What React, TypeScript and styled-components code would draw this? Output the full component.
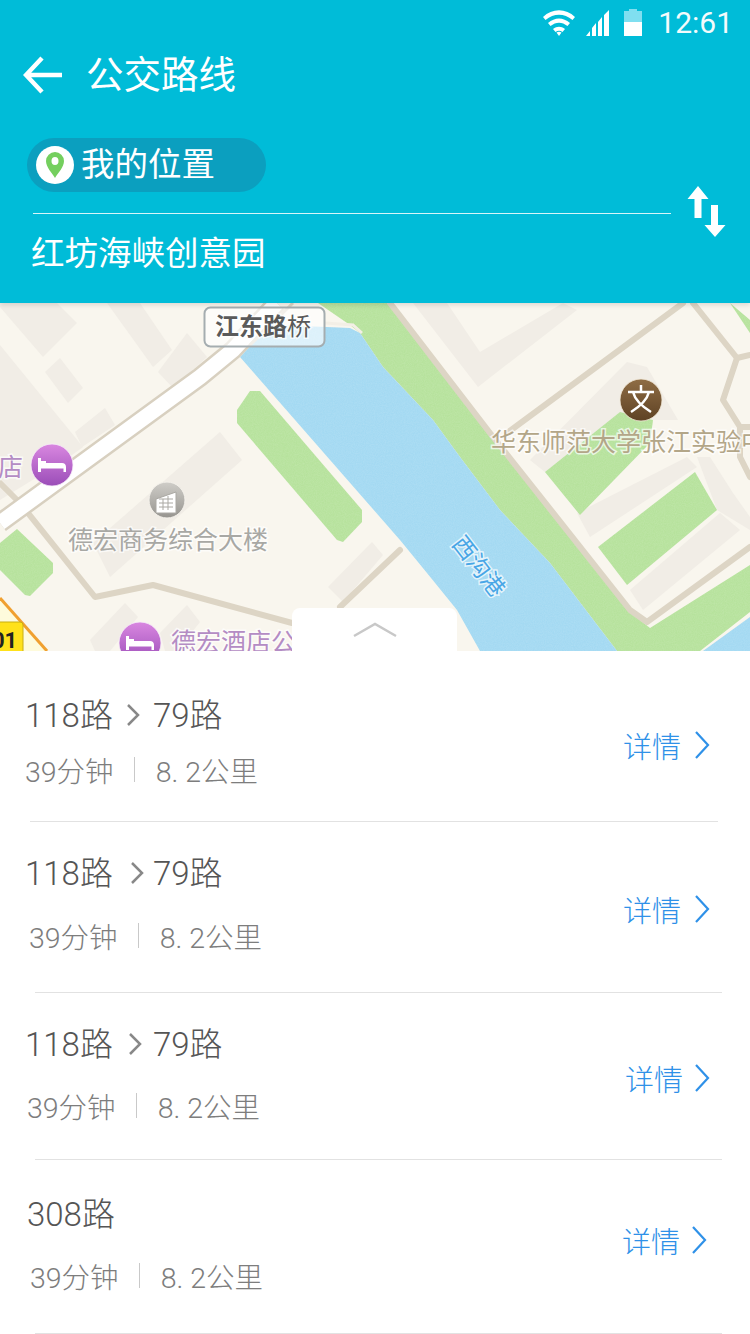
import styled, { createGlobalStyle } from 'styled-components';

const FONT = `Roboto, 'Noto Sans CJK SC', sans-serif`;

const GlobalStyle = createGlobalStyle`
  html, body { margin: 0; padding: 0; background: #fff; }
  body { font-family: ${FONT}; }
`;

const Page = styled.div`width: 750px; height: 1334px; overflow: hidden; background: #fff;`;

const Header = styled.header`
  height: 303px; background: #00bcd8; color: #fff; display: flex; flex-direction: column;
  position: relative; z-index: 2; box-shadow: 0 2px 5px rgba(0,0,0,.12);
`;
const StatusBar = styled.div`
  height: 45px; display: flex; align-items: center; justify-content: flex-end;
  padding-right: 17px; box-sizing: border-box;
`;
const StatusIcons = styled.div`display: flex; align-items: center; margin-right: 16px;`;
const StatusIcon = styled.svg<{ $gap?: number }>`display: block; margin-right: ${(p) => p.$gap ?? 0}px;`;
const Clock = styled.span`font-size: 30px; font-weight: 400; color: #f4fbfc;`;
const Toolbar = styled.div`height: 59px; display: flex; align-items: center; padding-left: 23px;`;
const BackIcon = styled.svg`width: 40px; height: 38px; margin-right: 23px;`;
const Title = styled.h1`margin: 0; font-size: 37.5px; font-weight: 400; line-height: 48px;`;
const RouteForm = styled.div`display: flex; padding: 34px 0 0 27px;`;
const Fields = styled.div`width: 644px;`;
const LocationPill = styled.div`
  width: 239px; height: 54px; border-radius: 27px; background: #0b9fbf;
  display: flex; align-items: center; padding-left: 9px; box-sizing: border-box;
`;
const PinBadge = styled.span`
  width: 38px; height: 38px; border-radius: 50%; background: #fff; margin-right: 7px;
  display: flex; align-items: center; justify-content: center;
`;
const FieldText = styled.span`font-size: 33.5px; font-weight: 400; line-height: 46px;`;
const FieldRule = styled.div`height: 1px; background: #d8f5f9; margin: 21px 0 0 6px;`;
const Destination = styled.div`margin: 17px 0 0 4px;`;
const SwapIcon = styled.svg`width: 40px; height: 52px; margin: 48px 0 0 16px;`;

const MapArea = styled.div`height: 348px; position: relative; overflow: hidden; background: #f9f6ee;`;
const MapDrawing = styled.svg`display: block; width: 750px; height: 348px;`;
const Handle = styled.div`
  position: absolute; left: 292px; bottom: 0; width: 165px; height: 43px; background: #fff;
  border-radius: 8px 8px 0 0; display: flex; justify-content: center; padding-top: 14px; box-sizing: border-box;
`;

const RouteRow = styled.div<{ $height: number; $top: number }>`
  height: ${(p) => p.$height}px; padding-top: ${(p) => p.$top}px; box-sizing: border-box;
  display: flex; justify-content: space-between; align-items: flex-start;
`;
const RouteInfo = styled.div<{ $left: number }>`padding-left: ${(p) => p.$left}px;`;
const RouteName = styled.div`
  display: flex; align-items: center; height: 40px; font-size: 33px; font-weight: 300; color: #555;
`;
const Transfer = styled.svg<{ $before: number; $after: number }>`
  width: 14px; height: 24px; margin: 4px ${(p) => p.$after}px 0 ${(p) => p.$before}px;
`;
const RouteMeta = styled.div<{ $gap: number; $indent: number }>`
  display: flex; align-items: center; height: 36px; font-size: 28.5px; font-weight: 300; color: #7d7d7d;
  margin: ${(p) => p.$gap}px 0 0 ${(p) => p.$indent}px;
`;
const MetaRule = styled.span`width: 1px; height: 25px; background: #c9c9c9; margin: 0 21px 0 20px;`;
const DetailLink = styled.div<{ $top: number; $right: number }>`
  display: flex; align-items: center; height: 40px; font-size: 29px; font-weight: 300; color: #2f91e8;
  margin: ${(p) => p.$top}px ${(p) => p.$right}px 0 0;
`;
const DetailChevron = styled.svg<{ $gap: number }>`width: 16px; height: 28px; margin-left: ${(p) => p.$gap}px;`;
const RowRule = styled.div<{ $left: number; $width: number }>`
  height: 1px; background: #e2e2e2; margin-left: ${(p) => p.$left}px; width: ${(p) => p.$width}px;
`;

const routes = [
  { name: ['118路', '79路'], height: 170, top: 42, left: 25, metaIndent: 0, gap: 18, before: 13, after: 13, detailTop: 32, detailRight: 40, chevGap: 13, ruleLeft: 30, ruleWidth: 688 },
  { name: ['118路', '79路'], height: 170, top: 29, left: 25, metaIndent: 4, gap: 26, before: 17, after: 9, detailTop: 38, detailRight: 40, chevGap: 13, ruleLeft: 35, ruleWidth: 687 },
  { name: ['118路', '79路'], height: 166, top: 29, left: 25, metaIndent: 2, gap: 25, before: 15, after: 11, detailTop: 36, detailRight: 40, chevGap: 11, ruleLeft: 35, ruleWidth: 687 },
  { name: ['308路'], height: 173, top: 32, left: 27, metaIndent: 3, gap: 25, before: 0, after: 0, detailTop: 28, detailRight: 43, chevGap: 11, ruleLeft: 35, ruleWidth: 687 },
];

const labelHalo = { paintOrder: 'stroke', stroke: 'rgba(255,255,255,.7)', strokeWidth: 3 } as const;

function Hotel({ x, y }: { x: number; y: number }) {
  return (
    <g transform={`translate(${x} ${y})`}>
      <circle r="21" fill="url(#hotelFill)" stroke="#f7eefa" strokeWidth=".8" />
      <path d="M-14-7h3v3h5v2H10c2.500 0 4 1.500 4 4v5h-2.500V3.500H-11V7h-3z" fill="#fff" />
    </g>
  );
}

function CityMap() {
  const road = { fill: 'none', stroke: '#ddd5c5', strokeWidth: 6, strokeLinejoin: 'round', strokeLinecap: 'round' } as const;
  return (
    <MapDrawing viewBox="0 303 750 348">
      <defs>
        <linearGradient id="hotelFill" x1="0" y1="0" x2="0" y2="1">
          <stop offset="0" stopColor="#d987e0" />
          <stop offset="1" stopColor="#9a4db8" />
        </linearGradient>
        <linearGradient id="officeFill" x1="0" y1="0" x2="0" y2="1">
          <stop offset="0" stopColor="#cfcdc8" />
          <stop offset="1" stopColor="#96948f" />
        </linearGradient>
        <linearGradient id="schoolFill" x1="0" y1="0" x2="0" y2="1">
          <stop offset="0" stopColor="#8f6d45" />
          <stop offset="1" stopColor="#5e4224" />
        </linearGradient>
        <filter id="grain" x="0" y="0" width="100%" height="100%">
          <feTurbulence type="fractalNoise" baseFrequency="0.9" numOctaves="2" />
          <feColorMatrix values="0 0 0 0 1  0 0 0 0 1  0 0 0 0 1  0 0 0 .5 -.12" />
          <feComposite in2="SourceAlpha" operator="in" />
        </filter>
      </defs>

      <g fill="#f1ede6">
        <polygon points="0,303 57,303 77,323 43,357 0,307" />
        <polygon points="0,345 83,447 65,460 0,500" />
        <polygon points="45,372 60,358 83,388 68,403" />
        <polygon points="75,432 105,408 115,425 82,447" />
        <polygon points="107,303 140,303 172,350 153,367" />
        <polygon points="158,372 187,333 207,357 173,388" />
        <polygon points="93,543 220,432 242,460 110,577" />
        <polygon points="328,587 372,542 383,555 343,602" />
        <polygon points="90,640 125,603 138,617 110,651 95,651" />
        <polygon points="160,633 187,605 200,622 177,651 165,651" />
        <polygon points="413,303 478,387 577,310 563,303 480,352 447,303" />
        <polygon points="530,460 627,362 647,367 678,420 653,420 620,412 545,472" />
        <polygon points="577,513 687,457 697,467 590,537" />
        <polygon points="697,457 710,457 733,493 750,517 750,530 717,510" />
        <polygon points="630,590 720,513 740,530 643,610" />
      </g>

      <polygon points="0,598 47,651 0,651" fill="#fefbdc" />
      <line x1="0" y1="598" x2="47" y2="651" stroke="#f0a030" strokeWidth="3" />

      <g id="waterAndGreen">
        <polygon points="345,303 392,303 486,430 630,612 650,628 750,565 750,612 700,651 617,651 550,563 500,510 460,457 433,420 383,367 360,333 350,325 318,303" fill="#b6e29c" />
        <polygon points="270,325 327,327 350,328 360,333 383,367 433,420 460,457 500,510 550,563 617,651 480,651 457,610 427,573 400,540 240,357" fill="#a3d9f2" />
        <polygon points="750,617 750,651 703,651" fill="#a3d9f2" />
        <g fill="#b6e29c">
          <polygon points="237,410 250,391 260,391 362,510 362,522 343,542 337,540 237,423" />
          <polygon points="0,543 17,529 53,563 53,573 30,596 25,595 0,570" />
          <polygon points="545,472 620,412 653,420 650,443 580,515" />
          <polygon points="598,547 695,472 717,510 627,585" />
          <polygon points="730,303 750,320 750,333" />
        </g>
      </g>
      <use href="#waterAndGreen" filter="url(#grain)" opacity=".35" />
      <polyline points="325,323 353,325 362,333" fill="none" stroke="#f3efe6" strokeWidth="3" />

      <polyline points="390,303 490,433 630,610 647,622 750,547" {...road} />
      <polyline points="507,433 683,303" {...road} />
      <polyline points="693,303 737,358 750,355" {...road} />
      <polyline points="737,358 723,400 740,427 750,427" {...road} />
      <polyline points="740,427 740,457 750,477" {...road} />
      <polyline points="0,483 20,503 95,597 153,585 292,623" {...road} />
      <polyline points="400,550 340,607" {...road} />
      <polyline points="0,523 200,377 233,350 277,303" fill="none" stroke="#d8d0c0" strokeWidth="20" />
      <polyline points="0,523 200,377 233,350 277,303" fill="none" stroke="#fff" strokeWidth="15" />
      <line x1="250" y1="345" x2="293" y2="303" stroke="#ddd5c5" strokeWidth="3" />

      <rect x="204.500" y="307.500" width="120" height="39" rx="6" fill="rgba(255,255,255,.62)" stroke="#a5adb0" strokeWidth="2" />
      <text x="215" y="335" fontSize="24" fontWeight="700" fill="#5a5a5a" fontFamily={FONT} style={labelHalo}>江东路<tspan fontSize="24" fontWeight="400">桥</tspan></text>

      <Hotel x={52} y={465} />
      <Hotel x={140} y={643} />
      <text x="-2" y="476" fontSize="25" fill="#b48cc4" fontFamily={FONT} style={labelHalo}>店</text>
      <text x="171" y="651" fontSize="25" fill="#b48cc4" fontFamily={FONT} style={labelHalo}>德宏酒店公</text>

      <circle cx="167" cy="500" r="18" fill="url(#officeFill)" stroke="#f5f2ec" strokeWidth="1" />
      <path d="M156 513v-14l20-7v21zM159 499h14M159 503h14M159 507h14M163 499v11M168 496v14" fill="#fff" stroke="#aaa8a3" strokeWidth="1" />
      <text x="68" y="549" fontSize="25" fill="#a8a8a4" fontFamily={FONT} style={labelHalo}>德宏商务综合大楼</text>

      <circle cx="641" cy="400" r="21" fill="url(#schoolFill)" stroke="#f3ead9" strokeWidth=".8" />
      <path d="M628 392h26M641 385v7M633 392c2 8 10 15 18 20M649 392c-2 8-10 15-18 20" fill="none" stroke="#fff" strokeWidth="2.500" />
      <text x="491" y="451" fontSize="25" fill="#b3a688" fontFamily={FONT} style={labelHalo}>华东师范大学张江实验中</text>

      <text transform="translate(451 544) rotate(52)" fontSize="23" fill="#48a6e6" fontFamily={FONT} style={labelHalo}>西沟港</text>

      <rect x="-6" y="622" width="29" height="36" rx="3" fill="#ffe11a" stroke="#c8ae10" />
      <text x="-8" y="648" fontSize="22" fontWeight="700" fill="#222" fontFamily={FONT}>01</text>
    </MapDrawing>
  );
}

export default function App() {
  return (
    <Page>
      <GlobalStyle />
      <Header>
        <StatusBar>
          <StatusIcons>
            <StatusIcon width="32" height="26" viewBox="0 0 32 26" $gap={11}>
              <path d="M0 7C9-2 23-2 32 7l-2.500 3C21 3 11 3 2.500 10z" fill="#fff" />
              <path d="M5 13c7-6 15-6 22 0l-2.500 3c-5.500-4.500-11.500-4.500-17 0z" fill="#fff" />
              <path d="M10 19c4-3 8-3 12 0l-2.500 3c-2.500-1.800-4.500-1.800-7 0z" fill="#fff" />
              <path d="M13.500 22.500c2-1 3-1 5 0L16 26z" fill="#fff" />
            </StatusIcon>
            <StatusIcon width="24" height="26" viewBox="0 0 24 26" $gap={14}>
              <path d="M0 26l4-5v5zM6 26v-8l4-5v13zM12 26V12l4-5v19zM18 26V5l5-5v26z" fill="#fff" />
            </StatusIcon>
            <StatusIcon width="18" height="27" viewBox="0 0 18 27">
              <path d="M5 0h8v2h5v11H0V2h5z" fill="#80dff0" />
              <rect y="13" width="18" height="14" fill="#fff" />
            </StatusIcon>
          </StatusIcons>
          <Clock>12:61</Clock>
        </StatusBar>
        <Toolbar>
          <BackIcon viewBox="0 0 40 38">
            <path d="M19 2L3 19l16 17M3 19h36" fill="none" stroke="#fff" strokeWidth="4.500" />
          </BackIcon>
          <Title>公交路线</Title>
        </Toolbar>
        <RouteForm>
          <Fields>
            <LocationPill>
              <PinBadge>
                <svg width="18" height="26" viewBox="0 0 18 26">
                  <path d="M9 0a9 9 0 0 1 9 9c0 6-6 12-9 17C6 21 0 15 0 9a9 9 0 0 1 9-9z" fill="#74cf5e" />
                  <ellipse cx="9" cy="9" rx="3.500" ry="4" fill="#fff" />
                </svg>
              </PinBadge>
              <FieldText>我的位置</FieldText>
            </LocationPill>
            <FieldRule />
            <Destination><FieldText>红坊海峡创意园</FieldText></Destination>
          </Fields>
          <SwapIcon viewBox="0 0 40 52">
            <path d="M11 0l10.500 13H14.500V32H7.500V13H.5z" fill="#fff" />
            <path d="M24 19h7V39h7.500L28 51 17.500 39H24z" fill="#fff" />
          </SwapIcon>
        </RouteForm>
      </Header>

      <MapArea>
        <CityMap />
        <Handle>
          <svg width="44" height="16" viewBox="0 0 44 16">
            <path d="M1 14L22 2l21 12" fill="none" stroke="#c8c8c8" strokeWidth="2.500" />
          </svg>
        </Handle>
      </MapArea>

      {routes.map((r, i) => (
        <div key={i}>
          <RouteRow $height={r.height} $top={r.top}>
            <RouteInfo $left={r.left}>
              <RouteName>
                {r.name[0]}
                {r.name[1] && (
                  <>
                    <Transfer viewBox="0 0 14 24" $before={r.before} $after={r.after}>
                      <path d="M2 2l10 10L2 22" fill="none" stroke="#888" strokeWidth="2.500" />
                    </Transfer>
                    {r.name[1]}
                  </>
                )}
              </RouteName>
              <RouteMeta $gap={r.gap} $indent={r.metaIndent}>
                39分钟<MetaRule />8. 2公里
              </RouteMeta>
            </RouteInfo>
            <DetailLink $top={r.detailTop} $right={r.detailRight}>
              详情
              <DetailChevron viewBox="0 0 16 28" $gap={r.chevGap}>
                <path d="M2 1l12 13L2 27" fill="none" stroke="#2f91e8" strokeWidth="2.200" />
              </DetailChevron>
            </DetailLink>
          </RouteRow>
          <RowRule $left={r.ruleLeft} $width={r.ruleWidth} />
        </div>
      ))}
    </Page>
  );
}
